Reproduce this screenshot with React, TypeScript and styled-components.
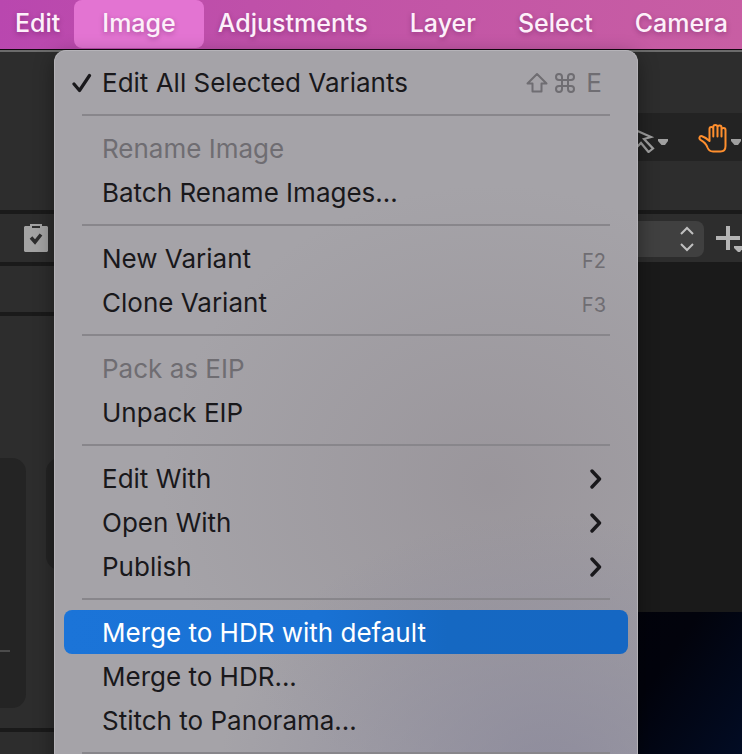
import React from "react";
import styled, { createGlobalStyle } from "styled-components";

const GlobalStyle = createGlobalStyle`
  * { box-sizing: border-box; }
  html, body, #root { height: 100%; }
  body {
    margin: 0;
    background: #2d2d2d;
    font-family: Inter, "Liberation Sans", sans-serif;
    overflow: hidden;
  }
  button, select { font: inherit; color: inherit; border: 0; padding: 0; background: none; }
`;

const Screen = styled.div`
  position: relative;
  display: flex;
  flex-direction: column;
  min-height: 100vh;
  overflow: hidden;
`;

const MenuBar = styled.nav`
  display: flex;
  flex: none;
  gap: 42px;
  height: 50px;
  padding: 0 15px 2px;
  background: linear-gradient(97deg, #b947af 0%, #c153a7 45%, #c85ea3 100%);
  border-bottom: 1px solid #120710;
`;

const MenuTitle = styled.button<{ $open?: boolean }>`
  flex: none;
  height: 48px;
  padding: 0 ${(p) => (p.$open ? 28 : 0)}px 2px;
  margin: 0 ${(p) => (p.$open ? -28 : 0)}px;
  border-radius: 8px;
  background: ${(p) => (p.$open ? "#e374d2" : "transparent")};
  color: #fdf0fa;
  font-size: 25px;
  font-weight: 500;
  text-shadow: 0 2px 5px rgba(70, 0, 60, 0.35);
`;

const Workspace = styled.div`
  display: flex;
  flex-direction: column;
  flex: 1;
  border-top: 2px solid #6b6b6b;
  background: #2d2d2d;
`;

const Header = styled.header`
  display: flex;
  justify-content: flex-end;
  height: 158px;
  padding: 61px 0 49px;
`;

const CursorTools = styled.div`
  display: flex;
  align-items: flex-end;
  height: 48px;
  padding: 0 0 8px 12px;
  background: #232323;
`;

const Tool = styled.button`
  display: flex;
  align-items: flex-end;
  flex: none;
  gap: 3px;
  margin-left: 29px;
  color: #a0a0a0;
`;

const Toolbar = styled.div`
  display: flex;
  align-items: center;
  justify-content: space-between;
  height: 56px;
  padding-left: 24px;
  border: solid #1a1a1a;
  border-width: 4px 0;
`;

const ToolbarGroup = styled.div`
  display: flex;
  align-items: center;
  gap: 12px;
  padding-top: 2px;
  color: #b4b4b4;
`;

const IconButton = styled.button`
  display: flex;
`;

const SelectBox = styled.label`
  display: grid;
  align-items: center;
  justify-items: end;
  width: 200px;
  height: 36px;
  border-radius: 8px;
  background: #404040;

  > * { grid-area: 1 / 1; }
  > svg { margin-right: 10px; pointer-events: none; }
`;

const PlainSelect = styled.select`
  appearance: none;
  width: 100%;
  height: 100%;
`;

const Body = styled.main`
  display: flex;
  flex: 1;
`;

const SidePanel = styled.aside`
  display: flex;
  flex-direction: column;
  width: 200px;
`;

const PanelHead = styled.div`
  height: 50px;
  border-bottom: 4px solid #1a1a1a;
`;

const PanelCards = styled.div`
  display: flex;
  align-items: flex-start;
  gap: 20px;
  height: 416px;
  padding-top: 142px;
  border-bottom: 4px solid #1a1a1a;
`;

const Card = styled.div<{ $wide?: boolean }>`
  flex: ${(p) => (p.$wide ? "1" : "none")};
  width: 26px;
  height: ${(p) => (p.$wide ? 112 : 250)}px;
  border-radius: ${(p) => (p.$wide ? "14px" : "0 14px 14px 0")};
  background: #242424;
`;

const CardRule = styled.div`
  width: 10px;
  margin-top: 192px;
  border-top: 2px solid #4b4b4b;
`;

const Viewer = styled.section`
  display: flex;
  flex: 1;
  padding-top: 346px;
  background: #1a1a1a;
`;

const Photo = styled.div`
  flex: 1;
  background: linear-gradient(125deg, #030209 0%, #02030c 78%, #020c24 100%);
`;

const Menu = styled.div`
  position: absolute;
  top: 50px;
  left: 54px;
  right: 104px;
  padding: 9px 9px 10px;
  border: solid #b5b3b8;
  border-width: 1px 1px 0;
  border-radius: 12px 12px 0 0;
  background:
    radial-gradient(ellipse 330px 260px at 85% 100%, rgba(135, 133, 153, 0.75), rgba(140, 136, 153, 0) 100%),
    radial-gradient(ellipse 330px 300px at 75% 60%, rgba(149, 144, 150, 0.7), rgba(160, 154, 160, 0) 100%),
    #a5a3a8;
  box-shadow: 0 6px 20px rgba(0, 0, 0, 0.4);
  color: #19181b;
`;

const Item = styled.button<{ $active?: boolean }>`
  display: grid;
  grid-template-columns: 38px 1fr auto;
  align-items: center;
  width: 100%;
  height: 44px;
  padding: 2px 26px 0 0;
  border-radius: 8px;
  background: ${(p) => (p.$active ? "linear-gradient(90deg, #1b74d8 0%, #1972d5 45%, #1568c2 68%, #1567c3 100%)" : "transparent")};
  color: ${(p) => (p.$active ? "#ffffff" : "inherit")};
  font-size: 26px;
  line-height: 42px;
  text-align: left;

  &:disabled { color: #6f6d72; }
`;

const Mark = styled.span`
  display: flex;
  padding-left: 8px;
`;

const Keys = styled.span`
  display: flex;
  align-items: center;
  gap: 7px;
  color: #6f6d72;
`;

const KeyLetter = styled.span`
  padding-left: 4px;
`;

const FunctionKey = styled.span`
  padding-top: 4px;
  margin-right: -4px;
  color: #6f6d72;
  font-size: 20px;
  line-height: 38px;
`;

const Separator = styled.hr`
  height: 2px;
  margin: 10px 18px;
  border: 0;
  background: #88868b;
`;

const Caret = () => (
  <svg width="11" height="14" viewBox="0 0 11 14" aria-hidden="true">
    <path d="M0 0H10V2L7 6H3.500L0 2Z" fill="currentColor" />
  </svg>
);

const ArrowIcon = () => (
  <svg width="24" height="25" viewBox="0 0 24 25" fill="none" stroke="#a0a0a0" strokeWidth="2.200" aria-hidden="true">
    <path d="M2 1L20 9L13 11L22 20.500L17.500 24L10 15L5 20Z" />
  </svg>
);

const HandIcon = () => (
  <svg width="30" height="30" viewBox="0 0 30 30" fill="none" stroke="#ff8f2e" strokeWidth="2" strokeLinecap="round" strokeLinejoin="round" aria-hidden="true">
    <path d="M11.500 13V5.800C11.500 3.400 15 3.400 15.300 5.500V4C15.300 1.200 19.300 1.200 19.500 4C19.800 1.800 23.500 1.900 23.500 4.500V6.500C23.700 4.400 27.500 4.300 27.500 7V23C27.500 26.500 25.500 28.500 22.500 28.500H15C12 28.500 10.500 27 9.500 24.500C8.500 21.500 6.200 18.800 2.500 16.800C0.500 15.500 1.500 12.500 4 13.200C6.500 14 8.800 15.500 11.500 18V13M15.300 5.500V13.500M19.500 4V13.500M23.500 6.500V13.500" />
  </svg>
);

const ClipboardIcon = () => (
  <svg width="24" height="28" viewBox="0 0 24 28" aria-hidden="true">
    <path d="M1 2H6V0H18V2H23L24 3V27L23 28H1L0 27V3Z" fill="#a3a3a3" />
    <path d="M8 2H16V4H8Z" fill="#2d2d2d" />
    <path d="M7 13.500L11 18L17 10.500" fill="none" stroke="#2d2d2d" strokeWidth="3.500" />
  </svg>
);

const UpDownIcon = () => (
  <svg width="14" height="26" viewBox="0 0 14 26" fill="none" stroke="#c0c0c0" strokeWidth="2" aria-hidden="true">
    <path d="M1 8L7 2L13 8M1 18L7 24L13 18" />
  </svg>
);

const PlusIcon = () => (
  <svg width="26" height="30" viewBox="0 0 26 30" aria-hidden="true">
    <path d="M10 2H14V12H24V16H14V26H10V16H0V12H10Z" fill="#b4b4b4" />
    <path d="M17 20H28V30H17Z" fill="#2d2d2d" />
    <path d="M18 22H27V24L24 28H22L18 24Z" fill="#b4b4b4" />
  </svg>
);

const CheckIcon = () => (
  <svg width="20" height="22" viewBox="0 0 20 22" fill="none" stroke="currentColor" strokeWidth="3.200" strokeLinecap="round" strokeLinejoin="round" aria-hidden="true">
    <path d="M2 12L7.500 18.500L17.500 3.500" />
  </svg>
);

const ChevronIcon = () => (
  <svg width="12" height="20" viewBox="0 0 12 20" fill="none" stroke="currentColor" strokeWidth="3.400" strokeLinecap="round" strokeLinejoin="round" aria-hidden="true">
    <path d="M2 2L9.500 10L2 18" />
  </svg>
);

const ShiftIcon = () => (
  <svg width="22" height="22" viewBox="0 0 22 22" fill="none" stroke="currentColor" strokeWidth="2" strokeLinejoin="round" aria-hidden="true">
    <path d="M11 2L20.500 11.500H15.500V19.500H6.500V11.500H1.500Z" />
  </svg>
);

const CommandIcon = () => (
  <svg width="20" height="22" viewBox="0 0 20 22" fill="none" stroke="currentColor" strokeWidth="2" aria-hidden="true">
    <path d="M7 8V5A3 3 0 1 0 4 8H16A3 3 0 1 0 13 5V17A3 3 0 1 0 16 14H4A3 3 0 1 0 7 17V8" />
  </svg>
);

type Entry = {
  label: string;
  checked?: boolean;
  disabled?: boolean;
  active?: boolean;
  submenu?: boolean;
  fkey?: string;
  shiftCommand?: string;
};

const titles = ["Edit", "Image", "Adjustments", "Layer", "Select", "Camera"];

const groups: Entry[][] = [
  [{ label: "Edit All Selected Variants", checked: true, shiftCommand: "E" }],
  [{ label: "Rename Image", disabled: true }, { label: "Batch Rename Images..." }],
  [{ label: "New Variant", fkey: "F2" }, { label: "Clone Variant", fkey: "F3" }],
  [{ label: "Pack as EIP", disabled: true }, { label: "Unpack EIP" }],
  [
    { label: "Edit With", submenu: true },
    { label: "Open With", submenu: true },
    { label: "Publish", submenu: true },
  ],
  [
    { label: "Merge to HDR with default", active: true },
    { label: "Merge to HDR..." },
    { label: "Stitch to Panorama..." },
  ],
];

const MenuEntry = ({ entry }: { entry: Entry }) => (
  <Item
    role={entry.checked ? "menuitemcheckbox" : "menuitem"}
    aria-checked={entry.checked}
    aria-haspopup={entry.submenu ? "menu" : undefined}
    disabled={entry.disabled}
    $active={entry.active}
  >
    <Mark>{entry.checked && <CheckIcon />}</Mark>
    <span>{entry.label}</span>
    {entry.submenu && <ChevronIcon />}
    {entry.fkey && <FunctionKey>{entry.fkey}</FunctionKey>}
    {entry.shiftCommand && (
      <Keys>
        <ShiftIcon />
        <CommandIcon />
        <KeyLetter>{entry.shiftCommand}</KeyLetter>
      </Keys>
    )}
  </Item>
);

export default function App() {
  return (
    <>
      <GlobalStyle />
      <Screen>
        <MenuBar aria-label="Application">
          {titles.map((title) => (
            <MenuTitle key={title} $open={title === "Image"}>
              {title}
            </MenuTitle>
          ))}
        </MenuBar>
        <Workspace>
          <Header>
            <CursorTools>
              <Tool aria-label="Select cursor">
                <ArrowIcon />
                <Caret />
              </Tool>
              <Tool aria-label="Pan cursor">
                <HandIcon />
                <Caret />
              </Tool>
            </CursorTools>
          </Header>
          <Toolbar>
            <IconButton aria-label="Apply adjustments">
              <ClipboardIcon />
            </IconButton>
            <ToolbarGroup>
              <SelectBox>
                <PlainSelect aria-label="Layer" />
                <UpDownIcon />
              </SelectBox>
              <IconButton aria-label="Add layer">
                <PlusIcon />
              </IconButton>
            </ToolbarGroup>
          </Toolbar>
          <Body>
            <SidePanel>
              <PanelHead />
              <PanelCards>
                <Card>
                  <CardRule />
                </Card>
                <Card $wide />
              </PanelCards>
            </SidePanel>
            <Viewer>
              <Photo />
            </Viewer>
          </Body>
        </Workspace>
        <Menu role="menu" aria-label="Image">
          {groups.map((group) => (
            <React.Fragment key={group[0].label}>
              {group.map((entry) => (
                <MenuEntry key={entry.label} entry={entry} />
              ))}
              <Separator />
            </React.Fragment>
          ))}
        </Menu>
      </Screen>
    </>
  );
}
